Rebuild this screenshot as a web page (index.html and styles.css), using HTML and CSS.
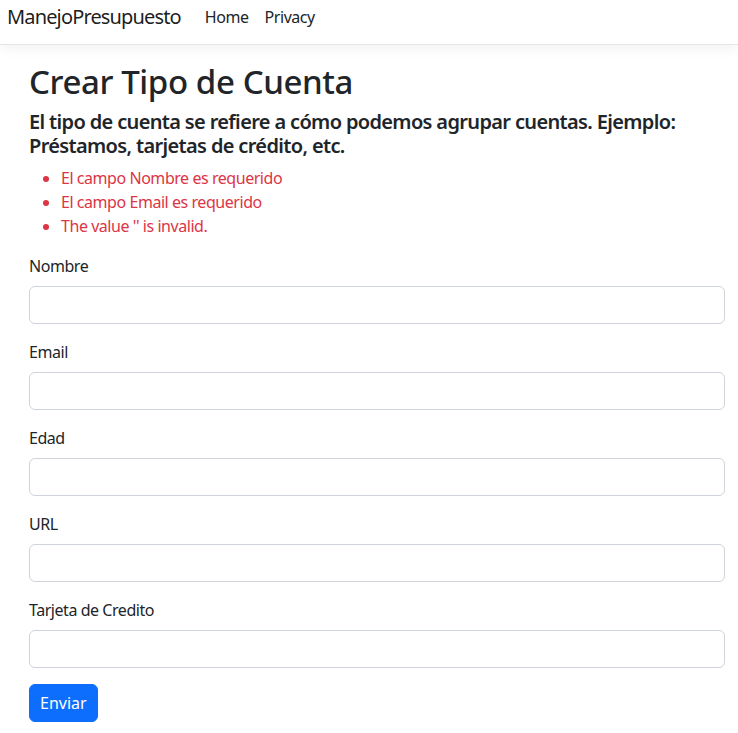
FILE: index.html
```html
<!DOCTYPE html>
<html lang="es">
<head>
<meta charset="utf-8">
<title>Crear Tipo de Cuenta - ManejoPresupuesto</title>
<link rel="stylesheet" href="styles.css">
</head>
<body>
<header class="navbar">
  <a class="brand" href="#">ManejoPresupuesto</a>
  <nav class="nav">
    <a class="nav-link" href="#">Home</a>
    <a class="nav-link" href="#">Privacy</a>
  </nav>
</header>
<main class="main">
  <h1 class="title">Crear Tipo de Cuenta</h1>
  <h5 class="subtitle">El tipo de cuenta se refiere a cómo podemos agrupar cuentas. Ejemplo: Préstamos, tarjetas de crédito, etc.</h5>
  <ul class="errors">
    <li>El campo Nombre es requerido</li>
    <li>El campo Email es requerido</li>
    <li>The value '' is invalid.</li>
  </ul>
  <form class="form">
    <div class="group">
      <label class="label" for="nombre">Nombre</label>
      <input class="input" id="nombre" type="text">
    </div>
    <div class="group">
      <label class="label" for="email">Email</label>
      <input class="input" id="email" type="text">
    </div>
    <div class="group">
      <label class="label" for="edad">Edad</label>
      <input class="input" id="edad" type="text">
    </div>
    <div class="group">
      <label class="label" for="url">URL</label>
      <input class="input" id="url" type="text">
    </div>
    <div class="group">
      <label class="label" for="tarjeta">Tarjeta de Credito</label>
      <input class="input" id="tarjeta" type="text">
    </div>
    <button class="btn" type="button">Enviar</button>
  </form>
</main>
</body>
</html>
```
FILE: styles.css
```css
* { box-sizing: border-box; }
html, body { margin: 0; padding: 0; }
body {
  font-family: "Noto Sans", "Open Sans", sans-serif;
  font-size: 16px;
  line-height: 1.5;
  letter-spacing: -0.45px;
  color: #212529;
  background: #fff;
}
.navbar {
  height: 45px;
  display: flex;
  align-items: flex-start;
  padding: 2px 0 0 7px;
  background: #fff;
  border-bottom: 1px solid #e5e5e5;
  box-shadow: 0 4px 12px rgba(0, 0, 0, 0.05);
}
.brand {
  font-size: 20px;
  line-height: 30px;
  letter-spacing: -0.85px;
  color: rgba(0, 0, 0, 0.9);
  text-decoration: none;
  margin-right: 16px;
}
.nav {
  display: flex;
  padding-top: 3px;
}
.nav-link {
  color: #212529;
  text-decoration: none;
  padding: 0 8px;
  line-height: 24px;
}
.main {
  padding: 17px 13px 12px 29px;
}
.title {
  font-size: 33px;
  font-weight: 500;
  line-height: 1.2;
  letter-spacing: -0.4px;
  margin: 0 0 8px;
}
.subtitle {
  font-size: 20px;
  font-weight: 600;
  line-height: 1.2;
  letter-spacing: -0.65px;
  margin: 0 0 8px;
}
.errors {
  color: #dc3545;
  margin: 0 0 16px;
  padding-left: 32px;
}
.form {
  display: flex;
  flex-direction: column;
}
.group {
  display: flex;
  flex-direction: column;
  margin-bottom: 16px;
}
.label {
  margin-bottom: 8px;
}
.input {
  height: 38px;
  padding: 6px 12px;
  font: inherit;
  border: 1px solid #ced4da;
  border-radius: 6px;
  background: #fff;
}
.btn {
  align-self: flex-start;
  height: 38px;
  padding: 6px 10px;
  font: inherit;
  color: #fff;
  background: #0d6efd;
  border: 1px solid #0d6efd;
  border-radius: 6px;
}
```
